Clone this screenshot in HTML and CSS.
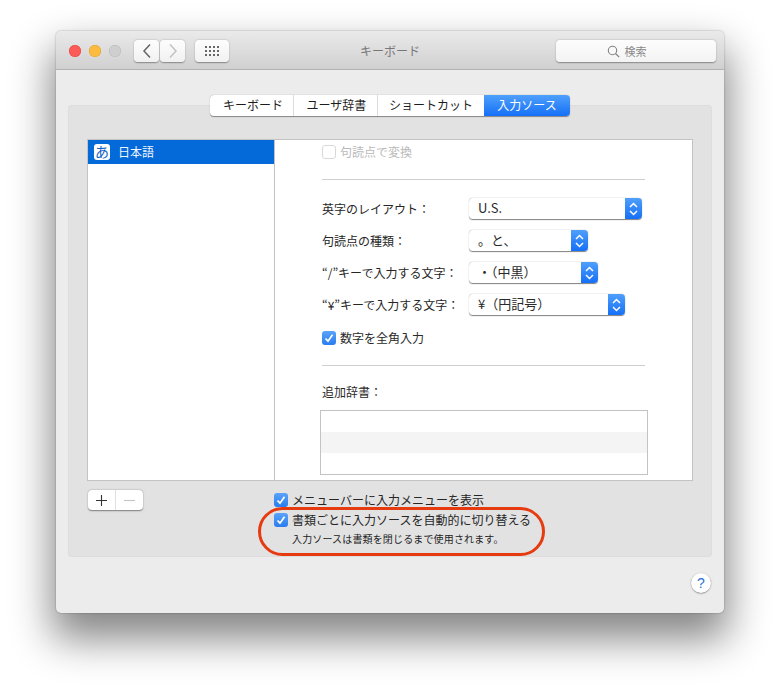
FILE: index.html
```html
<!DOCTYPE html>
<html lang="ja">
<head>
<meta charset="utf-8">
<title>キーボード</title>
<link rel="stylesheet" href="styles.css">
</head>
<body>
<div class="window">
  <header class="titlebar">
    <div class="tb-left">
      <span class="light red"></span>
      <span class="light yellow"></span>
      <span class="light gray"></span>
      <div class="nav">
        <button class="tb-btn nav-btn"><svg width="10" height="16" viewBox="0 0 10 16"><path d="M8 1.5 L2 8 L8 14.5" fill="none" stroke="#666" stroke-width="1.5"/></svg></button>
        <button class="tb-btn nav-btn"><svg width="10" height="16" viewBox="0 0 10 16"><path d="M2 1.5 L8 8 L2 14.5" fill="none" stroke="#c2c2c2" stroke-width="1.5"/></svg></button>
      </div>
      <button class="tb-btn grid-btn"><span class="dots"></span></button>
    </div>
    <div class="title">キーボード</div>
    <div class="tb-right">
      <div class="search">
        <svg width="13" height="13" viewBox="0 0 13 13"><circle cx="5.5" cy="5.5" r="4.2" fill="none" stroke="#808080" stroke-width="1.1"/><path d="M8.5 8.5 L12.2 12.2" stroke="#808080" stroke-width="1.2"/></svg>
        <span>検索</span>
      </div>
    </div>
  </header>

  <main class="group">
    <nav class="tabs">
      <div class="tab first">キーボード</div>
      <div class="tab second">ユーザ辞書</div>
      <div class="tab">ショートカット</div>
      <div class="tab active">入力ソース</div>
    </nav>

    <div class="panel">
      <aside class="sidebar">
        <div class="lang-row"><span class="lang-icon">あ</span><span class="txt">日本語</span></div>
      </aside>
      <section class="pane">
        <label class="check-row disabled"><span class="box-off"></span><span class="txt">句読点で変換</span></label>
        <div class="rule rule-first"></div>
        <div class="selects">
          <div class="sel-row"><span class="sel-label">英字のレイアウト：</span><div class="select w174"><span class="sel-val">U.S.</span><span class="stepper"><svg width="9" height="14" viewBox="0 0 9 14"><path d="M1 5 L4.5 1.5 L8 5 M1 9 L4.5 12.5 L8 9" fill="none" stroke="#fff" stroke-width="1.5"/></svg></span></div></div>
          <div class="sel-row"><span class="sel-label">句読点の種類：</span><div class="select w120"><span class="sel-val">。と、</span><span class="stepper"><svg width="9" height="14" viewBox="0 0 9 14"><path d="M1 5 L4.5 1.5 L8 5 M1 9 L4.5 12.5 L8 9" fill="none" stroke="#fff" stroke-width="1.5"/></svg></span></div></div>
          <div class="sel-row"><span class="sel-label">“/”キーで入力する文字：</span><div class="select w130"><span class="sel-val">・（中黒）</span><span class="stepper"><svg width="9" height="14" viewBox="0 0 9 14"><path d="M1 5 L4.5 1.5 L8 5 M1 9 L4.5 12.5 L8 9" fill="none" stroke="#fff" stroke-width="1.5"/></svg></span></div></div>
          <div class="sel-row"><span class="sel-label">“¥”キーで入力する文字：</span><div class="select w157"><span class="sel-val">¥（円記号）</span><span class="stepper"><svg width="9" height="14" viewBox="0 0 9 14"><path d="M1 5 L4.5 1.5 L8 5 M1 9 L4.5 12.5 L8 9" fill="none" stroke="#fff" stroke-width="1.5"/></svg></span></div></div>
        </div>
        <label class="check-row zenkaku"><span class="box-on"><svg width="14" height="14" viewBox="0 0 14 14"><path d="M3.5 7.5 L6 10.2 L10.5 3.8" fill="none" stroke="#fff" stroke-width="1.7"/></svg></span><span class="txt">数字を全角入力</span></label>
        <div class="rule rule-second"></div>
        <div class="dict-label">追加辞書：</div>
        <div class="dict">
          <div class="dict-row"></div>
          <div class="dict-row alt"></div>
          <div class="dict-row"></div>
        </div>
      </section>
    </div>

    <div class="bottom">
      <div class="addremove">
        <span class="ar-btn plus"><svg width="13" height="13" viewBox="0 0 13 13"><path d="M6.5 1 V12 M1 6.5 H12" stroke="#333" stroke-width="1.1"/></svg></span>
        <span class="ar-btn"><svg width="13" height="13" viewBox="0 0 13 13"><path d="M1 6.5 H12" stroke="#c4c4c4" stroke-width="1.1"/></svg></span>
      </div>
      <div class="options">
        <label class="opt-row"><span class="box-on"><svg width="14" height="14" viewBox="0 0 14 14"><path d="M3.5 7.5 L6 10.2 L10.5 3.8" fill="none" stroke="#fff" stroke-width="1.7"/></svg></span><span class="txt">メニューバーに入力メニューを表示</span></label>
        <label class="opt-row"><span class="box-on"><svg width="14" height="14" viewBox="0 0 14 14"><path d="M3.5 7.5 L6 10.2 L10.5 3.8" fill="none" stroke="#fff" stroke-width="1.7"/></svg></span><span class="txt">書類ごとに入力ソースを自動的に切り替える</span></label>
        <p class="note">入力ソースは書類を閉じるまで使用されます。</p>
      </div>
    </div>
    <div class="callout"></div>
  </main>

  <footer class="footer">
    <button class="help">?</button>
  </footer>
</div>
</body>
</html>
```

FILE: styles.css
```css
* { box-sizing: border-box; }

html, body { margin: 0; padding: 0; background: #fff; }

body {
  width: 780px;
  height: 693px;
  overflow: hidden;
  padding: 31px 0 0 56px;
  font-family: "Noto Sans CJK JP", "Noto Sans", sans-serif;
  font-size: 12px;
  color: #222;
}

.window {
  width: 668px;
  height: 582px;
  background: #ececec;
  border-radius: 5px;
  box-shadow: 0 22px 40px 4px rgba(0, 0, 0, .48), 0 0 2px rgba(0, 0, 0, .35);
  display: flex;
  flex-direction: column;
}

.titlebar {
  height: 39px;
  flex: none;
  display: grid;
  grid-template-columns: 1fr auto 1fr;
  align-items: center;
  padding: 2px 8px 0;
  background: linear-gradient(#ebeaeb, #d1d0d1);
  border-bottom: 1px solid #b2b2b2;
  border-radius: 5px 5px 0 0;
}

.tb-left { display: flex; align-items: center; padding-left: 5px; }

.light { width: 12px; height: 12px; border-radius: 50%; margin-right: 8px; flex: none; }
.red { background: #fc5b57; box-shadow: inset 0 0 0 .5px #e2463f; }
.yellow { background: #fdbc40; box-shadow: inset 0 0 0 .5px #dfa023; }
.gray { background: #cfcfcf; box-shadow: inset 0 0 0 .5px #b8b8b8; }

.nav { display: flex; gap: 1px; margin-left: 5px; }

.tb-btn {
  height: 22px;
  padding: 0;
  margin: 0;
  display: flex;
  align-items: center;
  justify-content: center;
  background: linear-gradient(#fdfdfd, #f1f1f1);
  border: 0;
  border-radius: 4px;
  box-shadow: 0 .5px 1.5px rgba(0, 0, 0, .38);
}

.nav-btn { width: 25px; }
.grid-btn { width: 34px; margin-left: 10px; }

.dots {
  width: 16px;
  height: 12px;
  background-image: radial-gradient(circle, #666 0, #666 1px, transparent 1.4px);
  background-size: 4px 4px;
}

.title { font-size: 12px; color: #777; line-height: 16px; }

.tb-right { display: flex; justify-content: flex-end; }

.search {
  width: 160px;
  height: 22px;
  display: flex;
  align-items: center;
  justify-content: center;
  gap: 5px;
  padding-right: 19px;
  color: #888;
  font-size: 11px;
  background: linear-gradient(#fdfdfd, #f3f3f3);
  border-radius: 4px;
  box-shadow: 0 .5px 1.5px rgba(0, 0, 0, .38);
}

.group {
  position: relative;
  height: 452px;
  flex: none;
  margin: 35px 12px 0;
  background: #e2e2e2;
  border-radius: 4px;
  box-shadow: inset 0 0 0 1px #dddddd;
}

.tabs {
  width: 360px;
  height: 21px;
  margin: -10px auto 0;
  display: flex;
  background: #fff;
  border-radius: 4px;
  box-shadow: 0 .5px 1px rgba(0, 0, 0, .42);
  overflow: hidden;
}

.tab {
  width: 84px;
  flex: none;
  text-align: center;
  line-height: 20px;
  color: #1c1c1c;
  border-right: 1px solid #dcdcdc;
}

.tab.first { padding-left: 3px; }
.tab.second { padding-left: 2px; }

.tab:nth-child(3) { width: 106px; border-right: 0; }

.tab.active {
  width: 86px;
  border-right: 0;
  color: #fff;
  background: linear-gradient(#4fa0fb, #1570f6);
}

.panel {
  height: 342px;
  margin: 23px 19px 0 19px;
  display: flex;
  background: #fff;
  border: 1px solid #c3c3c3;
}

.sidebar {
  width: 187px;
  flex: none;
  border-right: 1px solid #c3c3c3;
}

.lang-row {
  height: 24px;
  display: flex;
  align-items: center;
  gap: 8px;
  padding-left: 6px;
  background: #0469d9;
  color: #f2f6fd;
}

.lang-icon {
  width: 16px;
  height: 16px;
  background: #fff;
  border-radius: 3px;
  color: #0e62c4;
  font-size: 14px;
  line-height: 15px;
  text-align: center;
}

.txt { margin-bottom: 2px; }

.pane { flex: 1; padding: 2px 0 0 47px; min-width: 0; }

.check-row {
  height: 20px;
  display: flex;
  align-items: center;
  gap: 4px;
}

.disabled { color: #b9b9b9; }

.box-off {
  width: 14px;
  height: 14px;
  flex: none;
  background: #fff;
  border: 1px solid #d9d9d9;
  border-radius: 3px;
}

.box-on {
  width: 14px;
  height: 14px;
  flex: none;
  display: block;
  background: linear-gradient(#5aa3f8, #2a7df0);
  border-radius: 3px;
}

.box-on svg { display: block; }

.rule { width: 323px; height: 1px; background: #cfcfcf; }
.rule-first { margin-top: 17px; }
.rule-second { margin-top: 17px; }

.selects {
  margin-top: 18px;
  display: flex;
  flex-direction: column;
  gap: 11px;
}

.sel-row { display: flex; align-items: center; height: 21px; }

.sel-label { width: 146px; flex: none; white-space: nowrap; color: #262626; line-height: 18px; }

.select {
  height: 21px;
  margin-left: 1px;
  display: flex;
  background: #fff;
  border-radius: 4px;
  box-shadow: 0 .5px 1px rgba(0, 0, 0, .5);
  overflow: hidden;
}

.w174 { width: 173px; }
.w120 { width: 119px; }
.w130 { width: 129px; }
.w157 { width: 156px; }

.sel-val { flex: 1; padding-left: 9px; font-size: 13px; line-height: 19px; color: #2a2a2a; }

.stepper {
  width: 17px;
  flex: none;
  display: flex;
  align-items: center;
  justify-content: center;
  background: linear-gradient(#4f9ffb, #1570f6);
}

.zenkaku { margin-top: 13px; color: #2a2a2a; }

.dict-label { margin-top: 16px; height: 20px; line-height: 20px; color: #2a2a2a; }

.dict {
  width: 328px;
  height: 65px;
  margin: 8px 0 0 -2px;
  background: #fff;
  border: 1px solid #c3c3c3;
  display: flex;
  flex-direction: column;
}

.dict-row { flex: 1; }
.dict-row.alt { background: #f4f4f4; }

.bottom { display: flex; align-items: flex-start; padding: 9px 0 0 20px; }

.addremove {
  width: 55px;
  height: 20px;
  flex: none;
  display: flex;
  background: #fff;
  border-radius: 4px;
  box-shadow: 0 .5px 1.5px rgba(0, 0, 0, .45);
}

.ar-btn {
  flex: 1;
  display: flex;
  align-items: center;
  justify-content: center;
}

.plus { border-right: 1px solid #e0e0e0; }

.options { margin-left: 131px; }

.opt-row {
  height: 20px;
  display: flex;
  align-items: center;
  gap: 4px;
  white-space: nowrap;
  color: #262626;
}

.note {
  margin: 0;
  padding-left: 18px;
  font-size: 10px;
  letter-spacing: .15px;
  line-height: 18px;
  color: #222;
  white-space: nowrap;
}

.callout {
  position: absolute;
  left: 190px;
  top: 402px;
  width: 287px;
  height: 49px;
  border: 3px solid #e63a10;
  border-radius: 25px;
}

.footer { flex: 1; display: flex; justify-content: flex-end; padding: 16px 13px 0 0; }

.help {
  width: 20px;
  height: 20px;
  padding: 0;
  border: 0;
  border-radius: 50%;
  background: #fff;
  color: #2b73d2;
  font-family: "Liberation Sans", sans-serif;
  font-size: 14px;
  line-height: 20px;
  box-shadow: 0 .5px 1.5px rgba(0, 0, 0, .5);
}
```
